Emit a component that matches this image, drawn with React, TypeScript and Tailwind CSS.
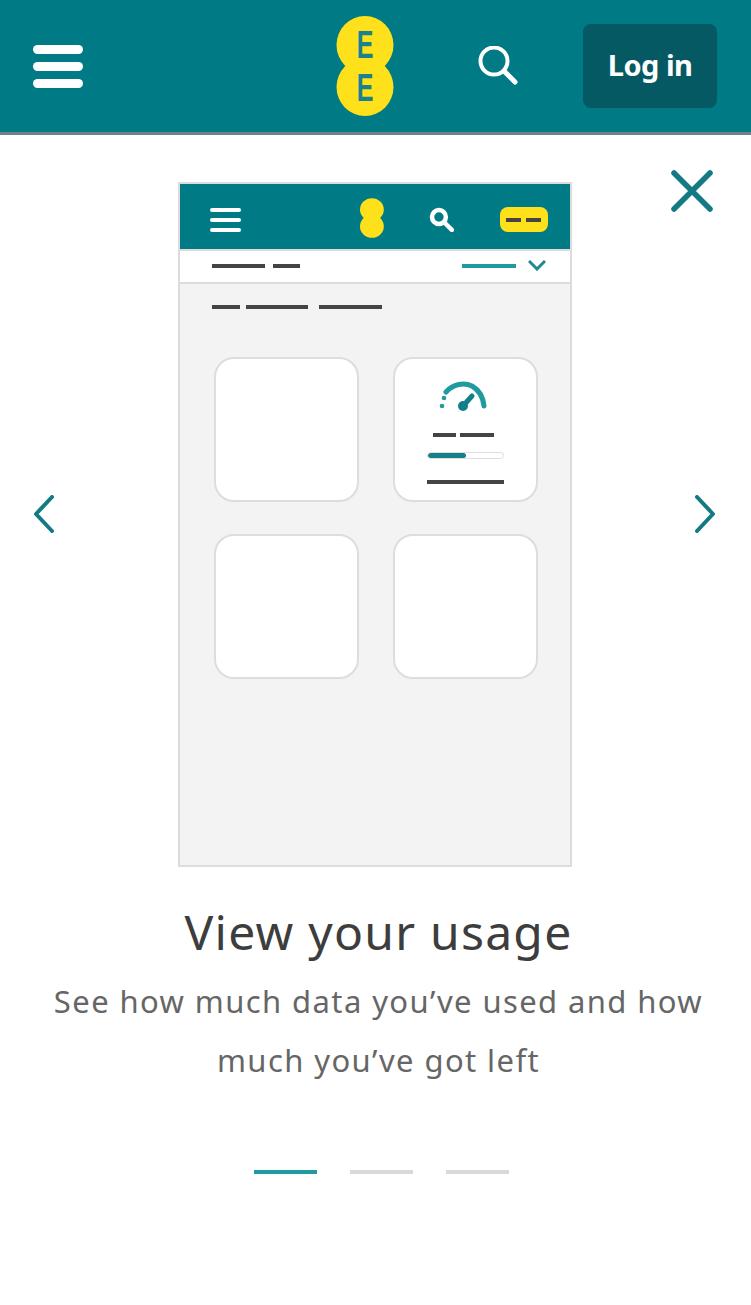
import React from 'react';

const MenuBars: React.FC = () => (
  <div className="flex w-[51px] flex-col gap-[8px]">
    <div className="h-[9px] rounded-full bg-white"></div>
    <div className="h-[9px] rounded-full bg-white"></div>
    <div className="h-[9px] rounded-full bg-white"></div>
  </div>
);

const Logo: React.FC = () => (
  <svg width="58" height="100" viewBox="0 0 58 100" className="block">
    <ellipse cx="29" cy="29" rx="28.5" ry="29" fill="#fee11a" />
    <ellipse cx="29" cy="71" rx="28.5" ry="29" fill="#fee11a" />
    <text transform="translate(29 42) scale(0.66 1)" textAnchor="middle" fontFamily="'Liberation Sans', sans-serif" fontWeight="700" fontSize="38" fill="#1a8190">E</text>
    <text transform="translate(29 85) scale(0.66 1)" textAnchor="middle" fontFamily="'Liberation Sans', sans-serif" fontWeight="700" fontSize="38" fill="#1a8190">E</text>
  </svg>
);

const SearchIcon: React.FC = () => (
  <svg width="42" height="40" viewBox="0 0 42 40" fill="none" stroke="white" strokeLinecap="round" className="block">
    <circle cx="16" cy="15" r="13.5" strokeWidth="4" />
    <path d="M26 25 L37 36" strokeWidth="5" />
  </svg>
);

const Dash: React.FC<{ w: string; className?: string }> = ({ w, className }) => (
  <div className={`h-[4px] ${w} ${className ?? 'bg-[#444444]'}`}></div>
);

const Gauge: React.FC = () => (
  <svg width="52" height="30" viewBox="0 0 52 30" fill="none" className="block">
    <path d="M9 11 C16 3 27 1 35 5 C42 9 46 15 47 25" stroke="#1f9a9e" strokeWidth="5" strokeLinecap="round" />
    <circle cx="7" cy="17" r="2.3" fill="#1f9a9e" />
    <circle cx="5" cy="25" r="2.3" fill="#1f9a9e" />
    <circle cx="26" cy="25" r="5" fill="#137f88" />
    <path d="M26 25 L35 15" stroke="#137f88" strokeWidth="5" strokeLinecap="round" />
  </svg>
);

const MockCard: React.FC<{ children?: React.ReactNode }> = ({ children }) => (
  <div className="h-[145px] w-[145px] rounded-[20px] border-2 border-[#dddddd] bg-white">{children}</div>
);

const PhoneMock: React.FC = () => (
  <div className="h-[685px] w-[394px] shrink-0 border-2 border-[#dcdcdc] bg-[#f3f3f3]">
    <div className="flex h-[65px] items-center bg-[#007b85] pl-[30px] pr-[22px] pt-[6px]">
      <div className="flex w-[32px] flex-col gap-[6px]">
        <div className="h-[4px] rounded-full bg-white"></div>
        <div className="h-[4px] rounded-full bg-white"></div>
        <div className="h-[4px] rounded-full bg-white"></div>
      </div>
      <svg width="24" height="40" viewBox="0 0 24 40" className="ml-[119px] mt-[-3px] block">
        <ellipse cx="12" cy="11.5" rx="12" ry="11.5" fill="#fee11a" />
        <ellipse cx="12" cy="28.5" rx="12" ry="11.5" fill="#fee11a" />
      </svg>
      <svg width="25" height="25" viewBox="0 0 25 25" fill="none" stroke="white" strokeLinecap="round" className="ml-[45px] block">
        <circle cx="10" cy="10" r="7" strokeWidth="4.5" />
        <path d="M15 15 L23 23" strokeWidth="4.5" />
      </svg>
      <div className="ml-[46px] flex h-[25px] w-[48px] items-center justify-center gap-[5px] rounded-[8px] bg-[#fee11a]">
        <Dash w="w-[15px]" />
        <Dash w="w-[15px]" />
      </div>
    </div>
    <div className="flex h-[35px] items-center justify-between border-t-2 border-b-2 border-[#dcdcdc] bg-white pb-[2px] pl-[32px] pr-[24px]">
      <div className="flex gap-[8px]">
        <Dash w="w-[53px]" />
        <Dash w="w-[27px]" />
      </div>
      <div className="flex items-center gap-[12px]">
        <Dash w="w-[54px]" className="bg-[#1f9a9e]" />
        <svg width="18" height="11" viewBox="0 0 18 11" fill="none" stroke="#1f8a92" strokeWidth="3" className="block">
          <path d="M1 1 L9 9 L17 1" />
        </svg>
      </div>
    </div>
    <div className="flex gap-[6px] pl-[32px] pt-[21px]">
      <Dash w="w-[28px]" />
      <Dash w="w-[62px]" />
      <Dash w="w-[63px]" className="ml-[5px] bg-[#444444]" />
    </div>
    <div className="grid grid-cols-[145px_145px] gap-x-[34px] gap-y-[32px] pl-[34px] pt-[48px]">
      <MockCard />
      <MockCard>
        <div className="flex flex-col items-center pt-[22px]">
          <div className="ml-[-4px]">
            <Gauge />
          </div>
          <div className="mt-[22px] ml-[-4px] flex gap-[4px]">
            <Dash w="w-[23px]" />
            <Dash w="w-[34px]" />
          </div>
          <div className="mt-[15px] h-[7px] w-[77px] overflow-hidden rounded-full border border-[#dddddd] bg-white">
            <div className="h-full w-[38px] rounded-full bg-[#137f88]"></div>
          </div>
          <Dash w="w-[77px]" className="mt-[21px] bg-[#444444]" />
        </div>
      </MockCard>
      <MockCard />
      <MockCard />
    </div>
  </div>
);

const Chevron: React.FC<{ d: string }> = ({ d }) => (
  <svg width="22" height="38" viewBox="0 0 22 38" fill="none" stroke="#137a84" strokeWidth="4" strokeLinecap="round" strokeLinejoin="round" className="mb-[22px] block shrink-0">
    <path d={d} />
  </svg>
);

export default function App() {
  return (
    <div className="min-h-[1305px] bg-white font-['Noto_Sans',sans-serif]">
      <header className="flex h-[135px] items-center border-b-[3px] border-[#6d8288] bg-[#007b85] pl-[33px] pr-[34px]">
        <MenuBars />
        <div className="ml-[253px]">
          <Logo />
        </div>
        <div className="ml-[84px]">
          <SearchIcon />
        </div>
        <button className="ml-[63px] h-[84px] w-[136px] rounded-[8px] bg-[#055962] pb-[3px] text-[29px] font-bold tracking-[-0.5px] text-white">
          Log in
        </button>
      </header>

      <main className="relative pt-[47px]">
        <button className="absolute right-[38px] top-[35px]">
          <svg width="42" height="42" viewBox="0 0 42 42" fill="none" stroke="#137a84" strokeWidth="5.5" strokeLinecap="round" className="block">
            <path d="M3 3 L39 39 M39 3 L3 39" />
          </svg>
        </button>

        <div className="flex items-center justify-between pl-[33px] pr-[35px]">
          <Chevron d="M19 2 L3 19 L19 36" />
          <PhoneMock />
          <Chevron d="M3 2 L19 19 L3 36" />
        </div>

        <div className="pl-[6px] text-center">
          <h1 className="mt-[32px] text-[48px] leading-[66px] tracking-[1.25px] text-[#3d3d3d]">View your usage</h1>
          <p className="mx-auto mt-[7px] w-[700px] text-[31px] leading-[59px] tracking-[1.4px] text-[#666666]">
            See how much data you’ve used and how much you’ve got left
          </p>
        </div>

        <div className="mt-[80px] flex justify-center gap-[33px] pl-[12px]">
          <div className="h-[4px] w-[63px] bg-[#1f9a9e]"></div>
          <div className="h-[4px] w-[63px] bg-[#d9d9d9]"></div>
          <div className="h-[4px] w-[63px] bg-[#d9d9d9]"></div>
        </div>
      </main>
    </div>
  );
}
